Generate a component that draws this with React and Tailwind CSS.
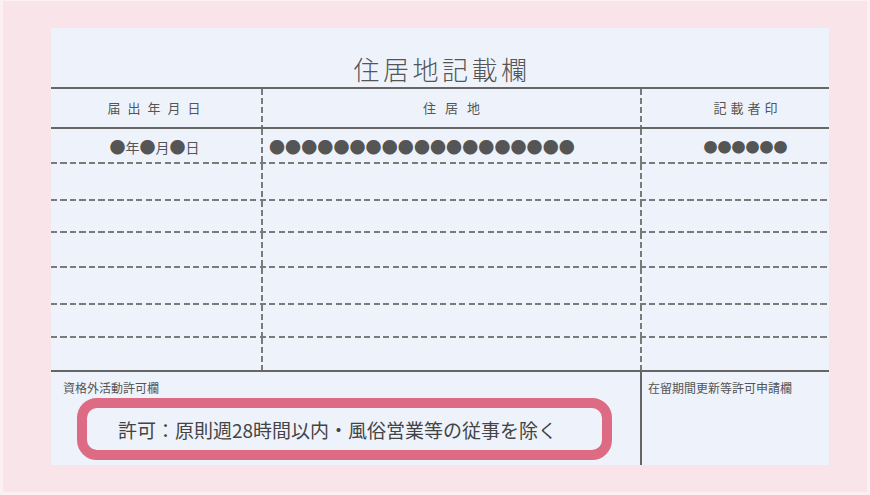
import React from 'react';

const font = { fontFamily: '"Noto Sans CJK JP", "Noto Sans", sans-serif' };

const HDash = () => (
  <div className="h-[2px] w-full bg-[repeating-linear-gradient(90deg,#7a7a7a_0_6px,transparent_6px_9.5px)]" />
);

const VDash = () => (
  <div className="w-[2px] self-stretch bg-[repeating-linear-gradient(180deg,#7a7a7a_0_6px,transparent_6px_9px)]" />
);

const Solid = () => <div className="h-[2px] w-full bg-[#666]" />;

const Row = ({ h, a, b, c }) => (
  <div className="flex" style={{ height: h }}>
    <div className="w-[210px] flex items-center justify-center pr-[3px]">{a}</div>
    <VDash />
    <div className="w-[377px] flex items-center pl-[6px]">{b}</div>
    <VDash />
    <div className="flex-1 flex items-center justify-center pl-[20px]">{c}</div>
  </div>
);

const rows = [35, 30, 33, 35, 31, 32];

const App = () => {
  return (
    <div className="w-[870px] h-[495px] bg-[#fcf0f3] pt-[1px] px-[3px] pb-[3px]" style={font}>
      <div className="w-full h-full bg-[#f9e4ea] pt-[27px] pl-[48px]">
        <div className="w-[778px] h-[437px] bg-[#eef3fb] flex flex-col text-[#555]">
          {/* title */}
          <div className="h-[59px] flex items-end justify-center pb-[5px]">
            <span className="text-[26px] leading-none tracking-[3.5px] pl-[4px] font-light">住居地記載欄</span>
          </div>
          <Solid />
          <div className="flex h-[38px] text-[13px] text-[#555]">
            <div className="w-[210px] flex items-center justify-center tracking-[7px] pl-[3px]">届出年月日</div>
            <VDash />
            <div className="w-[377px] flex items-center justify-center tracking-[9px] pl-[9px]">住居地</div>
            <VDash />
            <div className="flex-1 flex items-center justify-center tracking-[4px] pl-[24px]">記載者印</div>
          </div>
          <Solid />
          <Row
            h={33}
            a={
              <span className="text-[16px] leading-none text-[#555]">
                ●<span className="text-[14px]">年</span>●<span className="text-[14px]">月</span>●
                <span className="text-[14px]">日</span>
              </span>
            }
            b={<span className="text-[16px] leading-none tracking-[0.1px] text-[#555]">●●●●●●●●●●●●●●●●●●●</span>}
            c={<span className="text-[14px] leading-none text-[#555]">●●●●●●</span>}
          />
          {rows.map((h, i) => (
            <React.Fragment key={i}>
              <HDash />
              <Row h={h} />
            </React.Fragment>
          ))}
          <Solid />
          <div className="flex flex-1">
            <div className="w-[589px] flex flex-col pl-[12px] pt-[6px]">
              <div className="text-[12px] leading-[20px] text-[#555]">資格外活動許可欄</div>
              <div className="ml-[14px] w-[535px] h-[62px] border-[10px] border-[#dc6b83] rounded-[20px] flex items-center pl-[31px]">
                <span className="text-[19px] leading-none text-[#444] whitespace-nowrap">許可：原則週28時間以内・風俗営業等の従事を除く</span>
              </div>
            </div>
            <div className="w-[2px] bg-[#666]" />
            <div className="flex-1 pl-[6px] pt-[6px]">
              <div className="text-[12px] leading-[20px] text-[#555]">在留期間更新等許可申請欄</div>
            </div>
          </div>
        </div>
      </div>
    </div>
  );
};

export default App;
